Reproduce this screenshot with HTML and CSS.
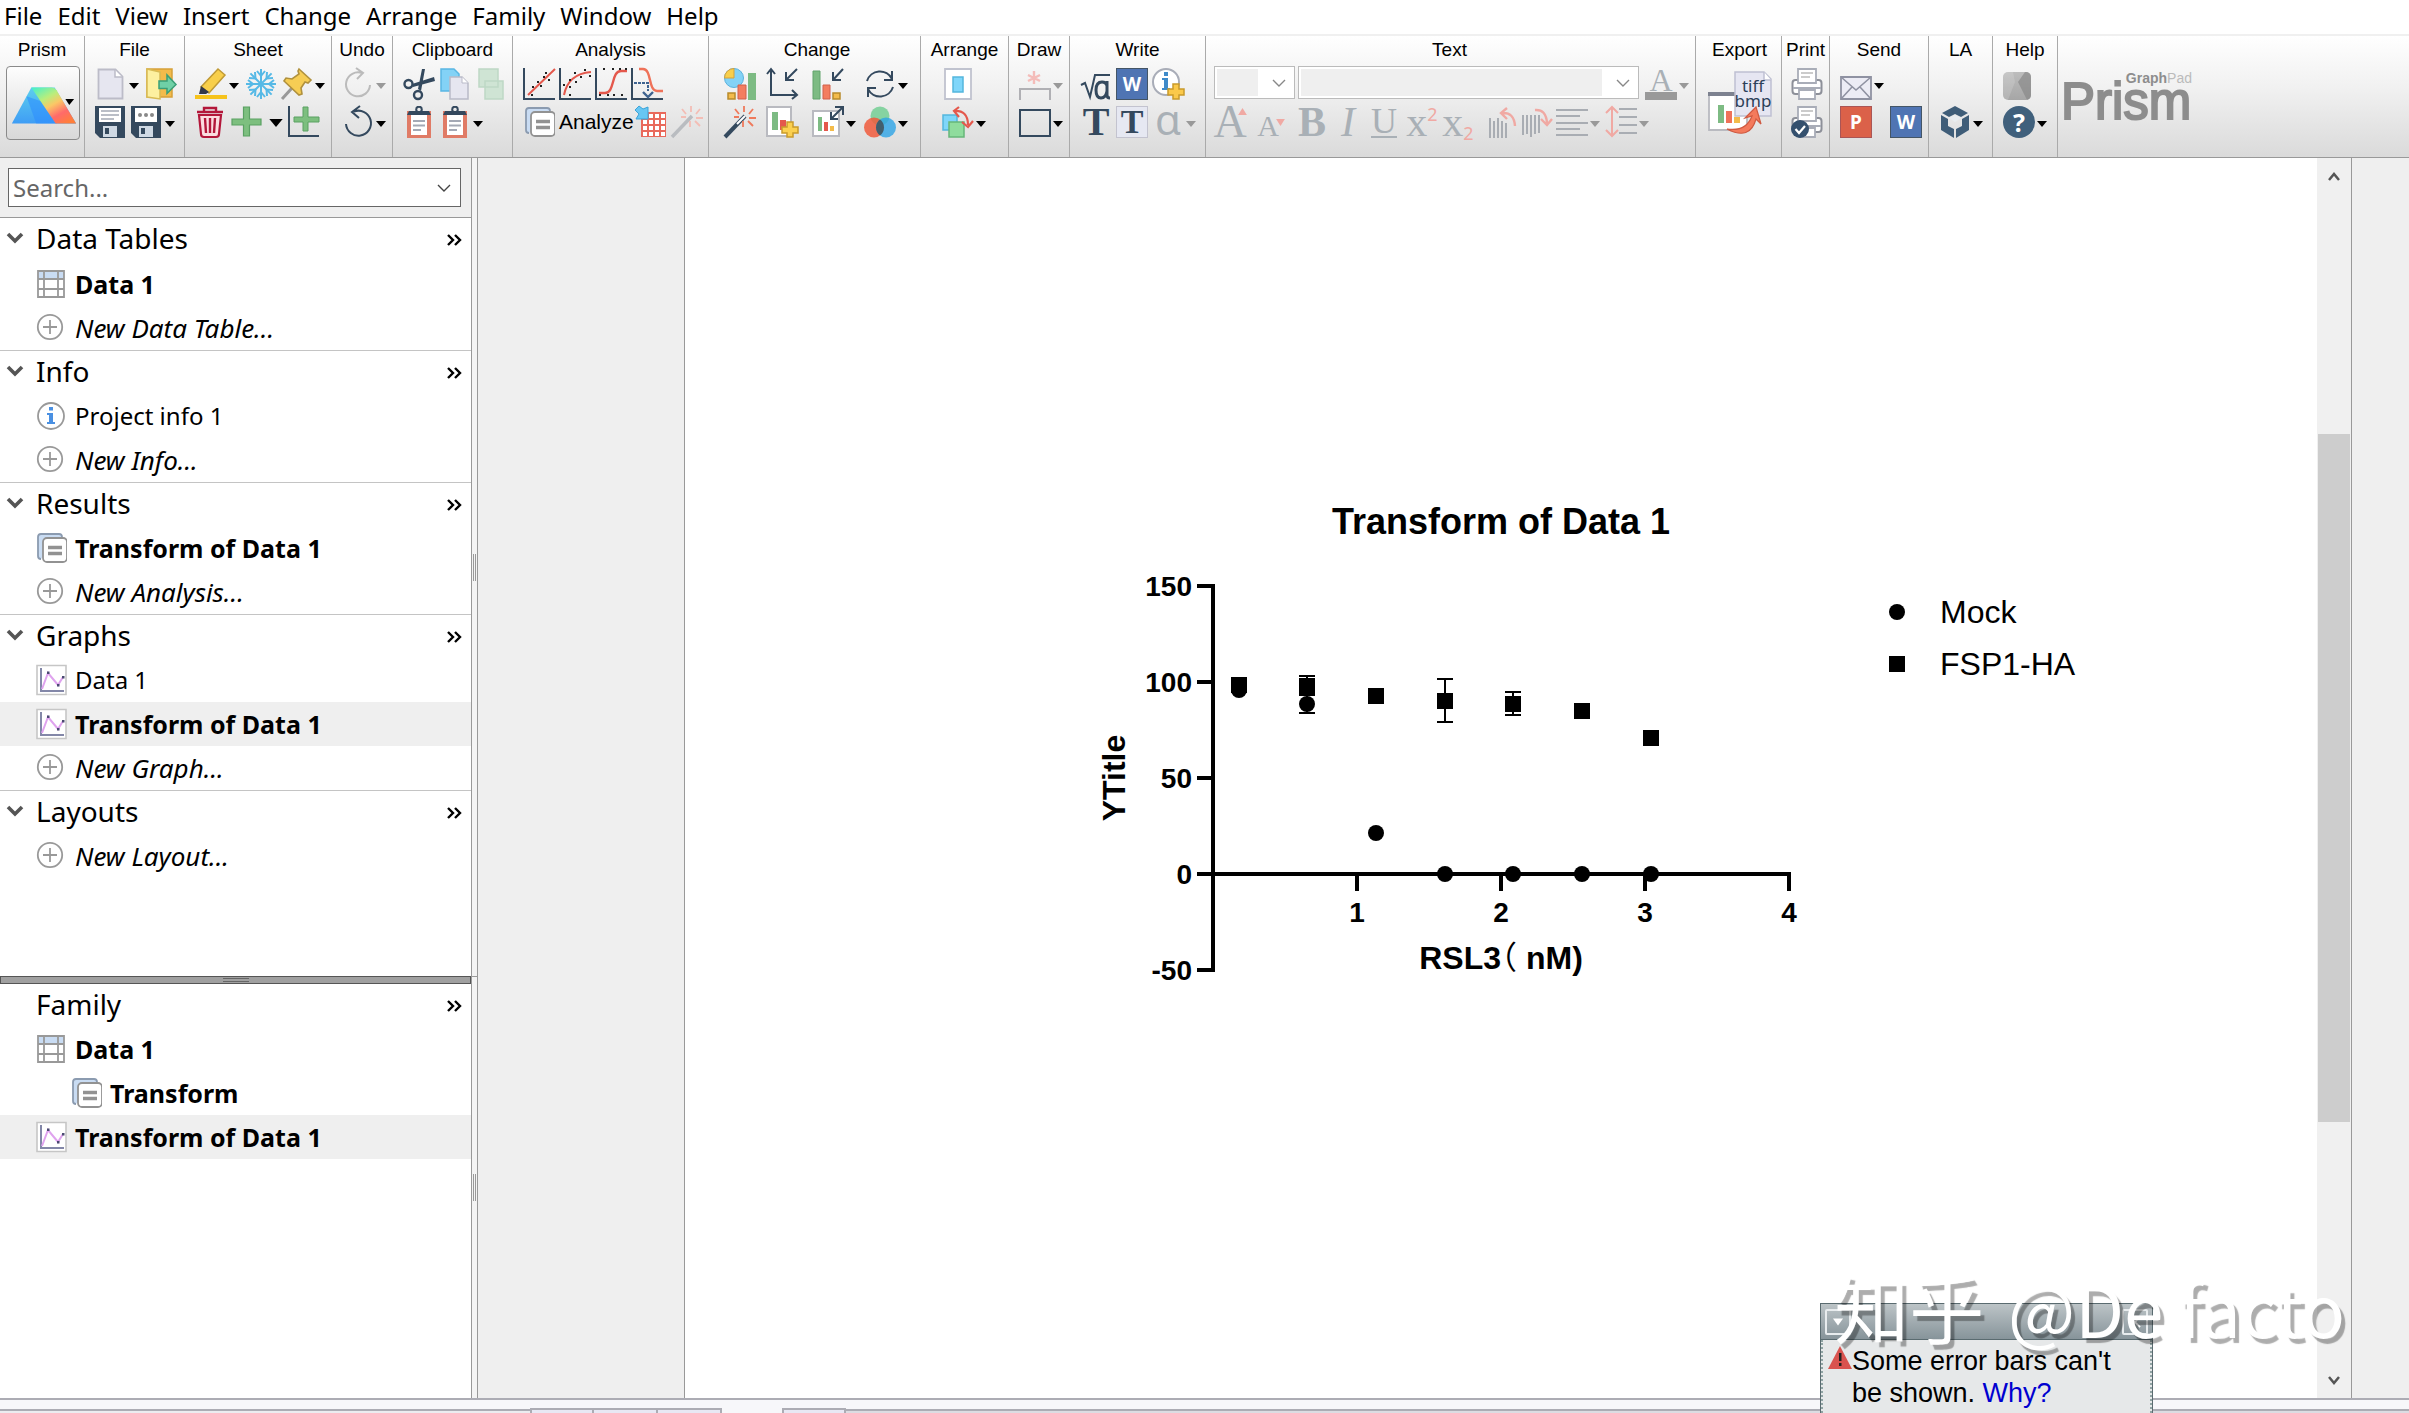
FILE: index.html
```html
<!DOCTYPE html>
<html lang="en">
<head>
<meta charset="utf-8">
<title>Prism - Transform of Data 1</title>
<link rel="stylesheet" href="styles.css">
</head>
<body>
<svg class="defs" aria-hidden="true">
  <defs>
    <linearGradient id="prism-left" x1="0" y1="0" x2="0" y2="1"><stop offset="0" stop-color="#5ccfee"/><stop offset="1" stop-color="#3f9df5"/></linearGradient>
    <linearGradient id="prism-right" x1="0.1" y1="0" x2="0.8" y2="1"><stop offset="0" stop-color="#4ff0c4"/><stop offset=".3" stop-color="#b9ee7c"/><stop offset=".5" stop-color="#fbc766"/><stop offset=".75" stop-color="#ff6a6a"/><stop offset="1" stop-color="#ff7f3a"/></linearGradient>
    <linearGradient id="badge-gray" x1="0" y1="0" x2="0" y2="1"><stop offset="0" stop-color="#bdbdbd"/><stop offset="1" stop-color="#a6a6a6"/></linearGradient>
    <symbol id="arrow" viewBox="0 0 10 6"><path d="M0 0h10L5 6z" fill="currentColor"/></symbol>
    <symbol id="chevron" viewBox="0 0 14 8"><path d="M1 1l6 6 6-6" fill="none" stroke="currentColor" stroke-width="1.4"/></symbol>
    <symbol id="fold" viewBox="0 0 18 12"><path d="M2 2l7 7 7-7" fill="none" stroke="#555" stroke-width="3.6"/></symbol>
    <symbol id="more" viewBox="0 0 16 12"><path d="M1 1l5 5-5 5M8 1l5 5-5 5" fill="none" stroke="#000" stroke-width="2.4"/></symbol>
    <symbol id="table" viewBox="0 0 32 32"><path d="M3 3h26v26H3z" fill="#fff"/><path d="M3 3h26v8H3z" fill="#c9dcf3"/><path d="M3 3h26v26H3zM9 3v26M23 3v26M3 11h26M3 21h26" fill="none" stroke="#999" stroke-width="1.8"/></symbol>
    <symbol id="plus" viewBox="0 0 32 32"><circle cx="15" cy="15" r="12.2" fill="#fff" stroke="#999" stroke-width="1.8"/><path d="M8 15h14M15 8v14" stroke="#999" stroke-width="1.8"/></symbol>
    <symbol id="info" viewBox="0 0 32 32"><circle cx="16" cy="16" r="13" fill="#fff" stroke="#999" stroke-width="1.8"/><path d="M14 7h4v3.500h-4zM12 13h6v9h2v2h-8v-2h2v-7h-2z" fill="#4a90e2"/></symbol>
    <symbol id="sheets" viewBox="0 0 32 32"><path d="M6 27q-3 0-3-3V5q0-3 3-3h18q3 0 3 3" fill="#c9dcf3" stroke="#8b9bb0" stroke-width="1.800"/><rect x="8" y="6" width="24" height="24" rx="4" fill="#fff" stroke="#929292" stroke-width="1.800"/><path d="M13 15.500h14M13 21.500h14" stroke="#929292" stroke-width="3.400"/></symbol>
    <symbol id="plot" viewBox="0 0 32 32"><path d="M2 1.500h29v29H2z" fill="#fff" stroke="#c6c6c6" stroke-width="1.600"/><path d="M6 4v23h23" fill="none" stroke="#8387a8" stroke-width="2"/><path d="M7 25l6-16 10 12 5-8" fill="none" stroke="#dfa3ee" stroke-width="2"/><path d="M12 7.500h2.500v2.500H12zM22 20h2.500v2.500H22zM27 12h2.500v2.500H27z" fill="#4a4a72"/></symbol>
    <symbol id="clip" viewBox="0 0 32 32"><rect x="6" y="7" width="20" height="24" fill="#fff" stroke="#e07b66" stroke-width="4"/><path d="M4 9l2-4h20l2 4z" fill="#34495e"/><circle cx="16" cy="3.500" r="2.800" fill="none" stroke="#34495e" stroke-width="2"/><path d="M10 15h12M10 19.500h12M10 24h8" stroke="#a4a9b5" stroke-width="2"/></symbol>
    <symbol id="printer" viewBox="0 0 32 32"><rect x="1.500" y="12" width="29" height="14" rx="3" fill="#fff" stroke="#8d9099" stroke-width="2"/><path d="M2 20h28" stroke="#a9adb8" stroke-width="2"/><path d="M7 1h18v14H7z" fill="#fff" stroke="#a9adb8" stroke-width="1.800"/><path d="M10 5h12M10 9h9" stroke="#bbb" stroke-width="1.500"/><path d="M8 22h16v9H8z" fill="#fff" stroke="#a9adb8" stroke-width="1.800"/></symbol>
  </defs>
</svg>

<nav class="menubar" aria-label="Main menu">
  <button>File</button><button>Edit</button><button>View</button><button>Insert</button><button>Change</button><button>Arrange</button><button>Family</button><button>Window</button><button>Help</button>
</nav>

<header class="toolbar">
  <section class="group g-prism"><h2>Prism</h2>
    <button class="prism-button" aria-label="Prism">
      <svg viewBox="0 0 74 74"><path d="M25 21h24l22 37H5z" fill="url(#prism-left)"/><path d="M37 36l14 22H30L20 30z" fill="#2b8cff" opacity=".55"/><path d="M25 21h21q3 0 5 3l20 34H50z" fill="url(#prism-right)"/><path d="M60 33h9l-5 6z" fill="#000"/></svg>
    </button>
  </section>

  <section class="group g-file"><h2>File</h2>
    <div class="row">
      <button class="tool" aria-label="New file"><svg class="ico" viewBox="0 0 32 32"><path d="M3.500 1.500h17l7 7v22h-24z" fill="#e6e6f0" stroke="#bcbcc8" stroke-width="1.800"/><path d="M20 2v7h7" fill="#fff" stroke="#bcbcc8" stroke-width="1.500"/></svg><svg class="arr"><use href="#arrow"/></svg></button>
      <button class="tool" aria-label="Open"><svg class="ico" viewBox="0 0 32 32"><path d="M2 1h25v28H2z" fill="#f3bb4b" stroke="#d6a13a" stroke-width="1.500"/><path d="M2 1l13 3v27L2 29z" fill="#fdf0a0" stroke="#d8bb54" stroke-width="1.500"/><path d="M14 13h8V7l9 9.500-9 9v-5h-8z" fill="#6fd0a6" stroke="#3a9e77" stroke-width="1.500"/></svg></button>
    </div>
    <div class="row">
      <button class="tool" aria-label="Save"><svg class="ico" viewBox="0 0 32 32"><path d="M0 0h30v32H5l-5-5z" fill="#34495e"/><path d="M4 2h22v14H4z" fill="#fff"/><path d="M6 5h18M6 9h18M6 13h13" stroke="#a4a9b5" stroke-width="1.600"/><path d="M8 20h14v11H8z" fill="#cfd9e4"/><path d="M10 22h4v6h-4z" fill="#34495e"/></svg></button>
      <button class="tool" aria-label="Save as"><svg class="ico" viewBox="0 0 32 32"><path d="M0 0h30v32H5l-5-5z" fill="#34495e"/><path d="M4 2h22v14H4z" fill="#fff"/><circle cx="9" cy="9" r="2" fill="#888"/><circle cx="15" cy="9" r="2" fill="#888"/><circle cx="21" cy="9" r="2" fill="#888"/><path d="M8 20h14v11H8z" fill="#cfd9e4"/><path d="M10 22h4v6h-4z" fill="#34495e"/></svg><svg class="arr"><use href="#arrow"/></svg></button>
    </div>
  </section>

  <section class="group g-sheet"><h2>Sheet</h2>
    <div class="row">
      <button class="tool" aria-label="Highlight"><svg class="ico" viewBox="0 0 32 32"><path d="M0 27h32v4H0z" fill="#f6c31c"/><path d="M23 1l7 6-16 18-8-6z" fill="#f8cf4b" stroke="#c09a35" stroke-width="1.500"/><path d="M6 18l8 6-3 2-7 0z" fill="#34384a"/></svg><svg class="arr"><use href="#arrow"/></svg></button>
      <button class="tool" aria-label="Freeze"><svg class="ico" viewBox="0 0 32 32"><g fill="none" stroke="#56b9e6" stroke-width="2"><path d="M16 1v30M1 16h30M5.400 5.400l21.200 21.200M26.600 5.400L5.400 26.600"/><path d="M12 3l4 5 4-5M12 29l4-5 4 5M3 12l5 4-5 4M29 12l-5 4 5 4M4 10l6.500.5L10 4M22 4l-.5 6.500L28 10M4 22l6.500-.5L10 28M22 28l-.5-6.500L28 22"/></g></svg></button>
      <button class="tool" aria-label="Pin"><svg class="ico" viewBox="0 0 32 32"><path d="M11 20L1 31" stroke="#999" stroke-width="3"/><path d="M18 1l12 11-3 3-3-1-4 6 1 6-3 1L3 13l2-3 6 1 7-5-1-3z" fill="#f6cd54" stroke="#b0913d" stroke-width="1.600"/></svg><svg class="arr"><use href="#arrow"/></svg></button>
    </div>
    <div class="row">
      <button class="tool" aria-label="Delete sheet"><svg class="ico" viewBox="0 0 32 32"><path d="M4 9h22l-2 19q0 3-3 3H9q-3 0-3-3z" fill="#fbdde0" stroke="#b3173a" stroke-width="2.200"/><path d="M2 6h26M9 5V2h12v3M10 12l1 15M15 12v15M20 12l-1 15" fill="none" stroke="#b3173a" stroke-width="2.400"/></svg></button>
      <button class="tool tool-wide" aria-label="New sheet"><svg class="ico" viewBox="0 0 32 32"><path d="M12.500 1h6v12H30v6H18.500v11h-6V19H1v-6h11.500z" fill="#7dbf7f" stroke="#5aa163" stroke-width="1.200"/></svg><svg class="arr arr-big"><use href="#arrow"/></svg></button>
      <button class="tool" aria-label="Add to axis"><svg class="ico" viewBox="0 0 32 32"><path d="M2 0v30h30" fill="none" stroke="#34495e" stroke-width="2"/><path d="M16 1h5v10h11v5H21v9h-5v-9H7v-5h9z" fill="#7dbf7f" stroke="#5aa163"/></svg></button>
    </div>
  </section>

  <section class="group g-undo"><h2>Undo</h2>
    <div class="row">
      <button class="tool off" aria-label="Redo" disabled><svg class="ico" viewBox="0 0 32 32"><path d="M28 17a12 12 0 1 1-8-12M14 0l7 5-6 6" fill="none" stroke="#bbb" stroke-width="2"/></svg><svg class="arr"><use href="#arrow"/></svg></button>
    </div>
    <div class="row">
      <button class="tool" aria-label="Undo"><svg class="ico" viewBox="0 0 32 32"><path d="M4 18a12.500 12.500 0 1 0 8-12.500M18 0l-8 6 7 6" fill="none" stroke="#34495e" stroke-width="2"/></svg><svg class="arr"><use href="#arrow"/></svg></button>
    </div>
  </section>

  <section class="group g-clip"><h2>Clipboard</h2>
    <div class="row">
      <button class="tool" aria-label="Cut"><svg class="ico" viewBox="0 0 32 32"><path d="M19 1l3 0-4 22-3-2zM31 9l1 4-22 6-1-3z" fill="#34495e"/><circle cx="5.500" cy="16" r="4" fill="none" stroke="#34495e" stroke-width="2.400"/><circle cx="15" cy="27" r="4" fill="none" stroke="#34495e" stroke-width="2.400"/></svg></button>
      <button class="tool" aria-label="Copy"><svg class="ico" viewBox="0 0 32 32"><path d="M2 1h13l5 5v17H2z" fill="#83d2f6" stroke="#5ab7e4" stroke-width="1.500"/><path d="M11 9h12l6 6v16H11z" fill="#e6e6f0" stroke="#b9bac8" stroke-width="1.500"/><path d="M23 9v6h6" fill="#fff" stroke="#b9bac8"/></svg></button>
      <button class="tool off" aria-label="Duplicate" disabled><svg class="ico" viewBox="0 0 32 32"><path d="M4 1h19v18H4zM10 13h18v18H10z" fill="#cfe4d4" stroke="#bed8c5" stroke-width="1.500"/></svg></button>
    </div>
    <div class="row">
      <button class="tool" aria-label="Paste"><svg class="ico"><use href="#clip"/></svg></button>
      <button class="tool" aria-label="Paste special"><svg class="ico"><use href="#clip"/></svg><svg class="arr"><use href="#arrow"/></svg></button>
    </div>
  </section>

  <section class="group g-analysis"><h2>Analysis</h2>
    <div class="row">
      <button class="tool" aria-label="Linear regression"><svg class="ico" viewBox="0 0 32 32"><path d="M1 0v31h31" fill="none" stroke="#34495e" stroke-width="2"/><path d="M5 27L32 1" stroke="#e4584c" stroke-width="2"/><path d="M9 18h2v2H9zM14 13h2v2h-2zM20 8h2v2h-2zM17 17h2v2h-2zM25 11h2v2h-2zM8 26h2v2H8zM22 4h2v2h-2z" fill="#222"/></svg></button>
      <button class="tool" aria-label="Curve fit"><svg class="ico" viewBox="0 0 32 32"><path d="M1 0v31h31" fill="none" stroke="#34495e" stroke-width="2"/><path d="M5 27Q9 6 32 4" fill="none" stroke="#e4584c" stroke-width="2"/><path d="M4 16h2v2H4zM10 11h2v2h-2zM15 4h2v2h-2zM10 18h2v2h-2zM16 13h2v2h-2zM21 8h2v2h-2zM25 1h2v2h-2zM30 7h2v2h-2zM10 26h2v2h-2z" fill="#222"/></svg></button>
      <button class="tool" aria-label="Dose response"><svg class="ico" viewBox="0 0 32 32"><path d="M1 0v31h31" fill="none" stroke="#34495e" stroke-width="2"/><path d="M4 25h6c10 0 6-22 16-22h6" fill="none" stroke="#e4584c" stroke-width="2.400"/><path d="M8 0h2v2H8zM17 0h2v2h-2zM24 0h2v2h-2zM30 0h2v2h-2zM4 26h2v2H4zM12 26h2v2h-2zM18 26h2v2h-2zM26 26h2v2h-2z" fill="#222"/></svg></button>
      <button class="tool" aria-label="Interpolate"><svg class="ico" viewBox="0 0 32 32"><path d="M1 0v31h31" fill="none" stroke="#34495e" stroke-width="2"/><path d="M8 1h4c9 0 5 22 14 22h6" fill="none" stroke="#ef7259" stroke-width="2.400"/><path d="M3 15h14v8" fill="none" stroke="#3e6390" stroke-width="2" stroke-dasharray="3 1"/><path d="M12 24l5 5 5-5" fill="none" stroke="#3e6390" stroke-width="2.400"/></svg></button>
    </div>
    <div class="row">
      <button class="tool tool-text"><svg class="ico"><use href="#sheets"/></svg>Analyze</button>
      <button class="tool" aria-label="Select data"><svg class="ico" viewBox="0 0 32 32"><path d="M6 6h25v25H6z" fill="#e9695b"/><path d="M8 8h4v4H8zM14 8h4v4h-4zM20 8h4v4h-4zM26 8h4v4h-4zM8 14h4v4H8zM14 14h4v4h-4zM20 14h4v4h-4zM26 14h4v4h-4zM8 20h4v4H8zM14 20h4v4h-4zM20 20h4v4h-4zM26 20h4v4h-4zM8 26h4v4H8zM14 26h4v4h-4zM20 26h4v4h-4zM26 26h4v4h-4z" fill="#fff"/><path d="M0 4l4-4 4 3 5-2v12H1l3-5z" fill="#67c6f3" stroke="#3ba3d8"/></svg></button>
      <button class="tool off" aria-label="Analysis wizard" disabled><svg class="ico" viewBox="0 0 32 32"><path d="M1 31L21 10" stroke="#b9bcc0" stroke-width="3.500"/><path d="M20 0v6M11 3l4 5M29 3l-4 5M25 12h7M24 15l5 5M19 15v6M10 11h5" stroke="#f3bdb5" stroke-width="1.800"/></svg></button>
    </div>
  </section>

  <section class="group g-change"><h2>Change</h2>
    <div class="row">
      <button class="tool" aria-label="Graph type"><svg class="ico" viewBox="0 0 32 32"><circle cx="10" cy="10" r="9.500" fill="#83d2f6" stroke="#5ab2dd"/><path d="M10 10H.5A9.500 9.500 0 0 1 10 .5z" fill="#f8cf4b" stroke="#d6a13a"/><path d="M4 25h7v6H4z" fill="#f3bb4b" stroke="#b88a2b" stroke-width="1.500"/><path d="M14 17h8v14h-8z" fill="#f37d5f" stroke="#d1604a"/><path d="M24 5h8v27h-8z" fill="#7dbb83"/></svg></button>
      <button class="tool" aria-label="Axes"><svg class="ico" viewBox="0 0 32 32"><path d="M5 1v26h26M1 6l4-5 4 5M26 22l5 5-5 4M31 1L20 12M20 4v8h8" fill="none" stroke="#34495e" stroke-width="2"/></svg></button>
      <button class="tool" aria-label="Bars"><svg class="ico" viewBox="0 0 32 32"><path d="M1 3h7v28H1z" fill="#7dbb83" stroke="#62a36c"/><path d="M11 17h7v14h-7z" fill="#f37d5f" stroke="#d1604a"/><path d="M21 25h7v6h-7z" fill="#f3bb4b" stroke="#b88a2b" stroke-width="1.500"/><path d="M31 1L21 12M21 4v8h8" fill="none" stroke="#34495e" stroke-width="2"/></svg></button>
      <button class="tool" aria-label="Swap"><svg class="ico" viewBox="0 0 32 32"><path d="M3 13A13.500 13.500 0 0 1 28 11M28 3v9h-8M29 19A13.500 13.500 0 0 1 4 21M4 29v-9h8" fill="none" stroke="#34495e" stroke-width="2"/></svg><svg class="arr"><use href="#arrow"/></svg></button>
    </div>
    <div class="row">
      <button class="tool" aria-label="Magic"><svg class="ico" viewBox="0 0 32 32"><path d="M1 31L21 10" stroke="#34495e" stroke-width="4"/><path d="M13 18l8-8" stroke="#fff" stroke-width="2"/><path d="M20 0v6M11 3l4 5M29 3l-4 5M25 12h7M24 15l5 5M19 15v6M10 11h5" stroke="#ef7a5c" stroke-width="1.800"/></svg></button>
      <button class="tool" aria-label="Add data set"><svg class="ico" viewBox="0 0 32 32"><path d="M1 1h24v29H1z" fill="#fff" stroke="#b9bac0" stroke-width="2"/><path d="M6 6h6v18H6z" fill="#7dbb83"/><path d="M14 14h6v10h-6z" fill="#e4584c"/><path d="M21 16h6v5h5v6h-5v4h-6v-4h-5v-6h5z" fill="#fbd04f" stroke="#c99a2b" stroke-width="1.500"/></svg></button>
      <button class="tool" aria-label="Resize graph"><svg class="ico" viewBox="0 0 32 32"><path d="M1 5h26v25H1z" fill="#fff" stroke="#b9bac0" stroke-width="2"/><path d="M6 11h4v14H6z" fill="#7dbb83"/><path d="M12 16h4v9h-4z" fill="#e4584c"/><path d="M18 20h4v5h-4z" fill="#f3bb4b"/><path d="M19 13L31 1M23 1h8v8M19 6v7h7" fill="none" stroke="#34495e" stroke-width="2"/></svg><svg class="arr"><use href="#arrow"/></svg></button>
      <button class="tool" aria-label="Color scheme"><svg class="ico" viewBox="0 0 32 32"><circle cx="16" cy="10" r="9.500" fill="#74cf94" opacity=".85"/><circle cx="10" cy="21.500" r="10" fill="#f05a3c" opacity=".85"/><circle cx="22" cy="21.500" r="10" fill="#2da4e6" opacity=".8"/><path d="M16 13.500a10 10 0 0 1 0 16 10 10 0 0 1 0-16z" fill="#40535c" opacity=".85"/></svg><svg class="arr"><use href="#arrow"/></svg></button>
    </div>
  </section>

  <section class="group g-arrange"><h2>Arrange</h2>
    <div class="row">
      <button class="tool" aria-label="Center"><svg class="ico" viewBox="0 0 32 32"><path d="M3 1h26v30H3z" fill="#fff" stroke="#c0c3cf" stroke-width="1.800"/><path d="M11 9h10v15H11z" fill="#7fd6fa" stroke="#54b6dd" stroke-width="1.500"/></svg></button>
    </div>
    <div class="row">
      <button class="tool" aria-label="Order"><svg class="ico" viewBox="0 0 32 32"><path d="M1 9h14v15H1z" fill="#7fd6fa" stroke="#54b6dd" stroke-width="1.500"/><path d="M7 16h15v15H7z" fill="#8fdc9d" stroke="#67b67a" stroke-width="1.500"/><path d="M12 5q14-1 14 14M17 1l-5 4 5 6M20 16l6 5 5-6" fill="none" stroke="#e4584c" stroke-width="2.200"/></svg><svg class="arr"><use href="#arrow"/></svg></button>
    </div>
  </section>

  <section class="group g-draw"><h2>Draw</h2>
    <div class="row">
      <button class="tool off" aria-label="Bracket" disabled><svg class="ico" viewBox="0 0 32 32"><path d="M1 32V21h30v11" fill="none" stroke="#b0b0b4" stroke-width="2"/><path d="M15 3v13M9 7l12 6M21 7L9 13" stroke="#f4bcb9" stroke-width="2.400"/></svg><svg class="arr"><use href="#arrow"/></svg></button>
    </div>
    <div class="row">
      <button class="tool" aria-label="Rectangle"><svg class="ico" viewBox="0 0 32 32"><path d="M1 4h30v26H1z" fill="none" stroke="#34495e" stroke-width="2"/></svg><svg class="arr"><use href="#arrow"/></svg></button>
    </div>
  </section>

  <section class="group g-write"><h2>Write</h2>
    <div class="row">
      <button class="tool" aria-label="Equation"><svg class="ico" viewBox="0 0 32 32"><path d="M1 17l4-2 5 14 5-22h15" fill="none" stroke="#34495e" stroke-width="2"/><path d="M27 13v14q0 3 3 3M27 18q-1-4-5-4-6 0-6 8t5 8q5 0 6-7" fill="none" stroke="#34495e" stroke-width="3"/></svg></button>
      <button class="tool" aria-label="Word object"><span class="tile tile-w">W</span></button>
      <button class="tool" aria-label="Add info"><svg class="ico" viewBox="0 0 32 32"><circle cx="14" cy="14" r="13" fill="#fff" stroke="#a9adb8" stroke-width="2"/><path d="M12 4h4v4h-4zM10 10h6v10h2v2h-8v-2h2v-8h-2z" fill="#3f8ac9"/><path d="M21 16h6v5h5v6h-5v4h-6v-4h-5v-6h5z" fill="#fbc94a" stroke="#c99a2b" stroke-width="1.500"/></svg></button>
    </div>
    <div class="row">
      <button class="tool glyph" aria-label="Text">T</button>
      <button class="tool glyph" aria-label="Text box"><span class="tile tile-t">T</span></button>
      <button class="tool glyph off" aria-label="Greek" disabled><span class="alpha">α</span><svg class="arr"><use href="#arrow"/></svg></button>
    </div>
  </section>

  <section class="group g-text"><h2>Text</h2>
    <div class="row">
      <span class="combo combo-size"><select aria-label="Font size" disabled><option></option></select><svg><use href="#chevron"/></svg></span>
      <span class="combo combo-font"><select aria-label="Font" disabled><option></option></select><svg><use href="#chevron"/></svg></span>
      <button class="tool glyph off" aria-label="Text color" disabled><span class="ink">A</span><svg class="arr"><use href="#arrow"/></svg></button>
    </div>
    <div class="row">
      <button class="tool glyph off" aria-label="Larger text" disabled><span class="big">A</span><svg class="tri" viewBox="0 0 10 8"><path d="M0 8h10L5 0z"/></svg></button>
      <button class="tool glyph off" aria-label="Smaller text" disabled><span class="small">A</span><svg class="tri tri-down" viewBox="0 0 10 8"><path d="M0 0h10L5 8z"/></svg></button>
      <button class="tool glyph off" aria-label="Bold" disabled><b>B</b></button>
      <button class="tool glyph off" aria-label="Italic" disabled><i>I</i></button>
      <button class="tool glyph off" aria-label="Underline" disabled><span class="under">U</span></button>
      <button class="tool glyph off" aria-label="Superscript" disabled>x<span class="script sup">2</span></button>
      <button class="tool glyph off" aria-label="Subscript" disabled>x<span class="script sub">2</span></button>
      <button class="tool off" aria-label="Rotate left" disabled><svg class="ico" viewBox="0 0 32 32"><path d="M6 12v20M10 15v17M14 12v20M18 15v17M22 17v15" stroke="#a9adb3" stroke-width="2"/><path d="M18 7q12-1 13 13M23 2l-6 5 6 6" fill="none" stroke="#f0a9a3" stroke-width="2.400"/></svg></button>
      <button class="tool off" aria-label="Rotate right" disabled><svg class="ico" viewBox="0 0 32 32"><path d="M3 9v20M7 9v19M11 9v22M15 9v19M19 9v18" stroke="#a9adb3" stroke-width="2"/><path d="M15 4q11-1 12 13M21 13l6 6 5-6" fill="none" stroke="#f0a9a3" stroke-width="2.400"/></svg></button>
      <button class="tool off" aria-label="Align" disabled><svg class="ico" viewBox="0 0 32 32"><path d="M0 4h32M0 10h24M0 17h32M0 23h24M0 29h32" stroke="#a9adb3" stroke-width="2"/></svg><svg class="arr"><use href="#arrow"/></svg></button>
      <button class="tool off" aria-label="Line spacing" disabled><svg class="ico" viewBox="0 0 32 32"><path d="M14 3h18M14 11h18M14 19h18M14 27h18" stroke="#a9adb3" stroke-width="2"/><path d="M7 1v29M1 7l6-6 6 6M1 24l6 6 6-6" fill="none" stroke="#f0a9a3" stroke-width="2"/></svg><svg class="arr"><use href="#arrow"/></svg></button>
    </div>
  </section>

  <section class="group g-export"><h2>Export</h2>
    <button class="export-button" aria-label="Export"><svg viewBox="0 0 64 64"><path d="M1 23h38v36H1z" fill="#fff" stroke="#b9bac0" stroke-width="1.800"/><path d="M0 21h39v4H0z" fill="#7d8290"/><path d="M10 34h6v18h-6z" fill="#7dbb83"/><path d="M18 40h6v12h-6z" fill="#ef7259"/><path d="M26 46h6v6h-6z" fill="#f3bb4b"/><path d="M27 1h29l7 7v37H27z" fill="#e6e6f2" stroke="#bfc0d2" stroke-width="1.500"/><path d="M56 1v8h7" fill="#fff" stroke="#bfc0d2" stroke-width="1.500"/><text x="45" y="21" class="fmt">tiff</text><text x="45" y="36" class="fmt">bmp</text><path d="M19 58q19 3 25-13l-7 2 11-11 5 17-5-5q-6 22-29 10z" fill="#f47a5c" stroke="#cf5a42" stroke-width="1.200"/></svg></button>
  </section>

  <section class="group g-print"><h2>Print</h2>
    <div class="row"><button class="tool" aria-label="Print"><svg class="ico"><use href="#printer"/></svg></button></div>
    <div class="row"><button class="tool" aria-label="Print now"><svg class="ico" viewBox="0 0 32 32"><use href="#printer" width="32" height="32"/><circle cx="9" cy="23" r="9" fill="#34506e"/><path d="M4.500 23l3.500 4 6-7" fill="none" stroke="#fff" stroke-width="2.200"/></svg></button></div>
  </section>

  <section class="group g-send"><h2>Send</h2>
    <div class="row"><button class="tool" aria-label="Mail"><svg class="ico" viewBox="0 0 32 32"><path d="M1 9h30v22H1z" fill="#ececf5" stroke="#8f92a2" stroke-width="1.800"/><path d="M1 9l15 13L31 9M1 31l11-12M31 31L20 19" fill="none" stroke="#8f92a2" stroke-width="1.600"/></svg><svg class="arr"><use href="#arrow"/></svg></button></div>
    <div class="row"><button class="tool" aria-label="Send to PowerPoint"><span class="tile tile-p">P</span></button><button class="tool" aria-label="Send to Word"><span class="tile tile-w">W</span></button></div>
  </section>

  <section class="group g-la"><h2>LA</h2>
    <div class="row"></div>
    <div class="row"><button class="tool" aria-label="LabArchives"><svg class="ico" viewBox="0 0 32 32"><path d="M16 0l13 7-7 4-6-3-6 3-7-4zM2 9l7 4v7l6 3v9L2 24zM30 9v15l-13 8v-9l6-3v-7z" fill="#3f5d78"/><path d="M10 12l6-3 6 3-6 4z" fill="#e9edf0"/></svg><svg class="arr"><use href="#arrow"/></svg></button></div>
  </section>

  <section class="group g-help"><h2>Help</h2>
    <div class="row"><button class="tool" aria-label="Prism academy"><svg class="ico" viewBox="0 0 32 32"><rect x="0" y="4" width="28" height="28" rx="5" fill="url(#badge-gray)"/><path d="M12 14L5 32H0V9q0-3 3-5h7z" fill="#fff" opacity=".15"/><path d="M15 14l7-10h2q4 1 4 5v18q0 4-4 5z" fill="#868686" opacity=".65"/></svg></button></div>
    <div class="row"><button class="tool" aria-label="Help"><span class="tile tile-help">?</span><svg class="arr"><use href="#arrow"/></svg></button></div>
  </section>

  <div class="brand"><span class="brand-top">Graph<span>Pad</span></span><span class="brand-name">Prism</span></div>
</header>

<div class="workspace">
  <aside class="sidebar">
    <div class="search">
      <label class="search-box"><input type="text" placeholder="Search..." aria-label="Search"><svg><use href="#chevron"/></svg></label>
    </div>
    <div class="tree">
      <section>
        <h3><svg class="fold"><use href="#fold"/></svg><span>Data Tables</span><button aria-label="More data tables"><svg><use href="#more"/></svg></button></h3>
        <a class="item strong" href="#"><svg><use href="#table"/></svg>Data 1</a>
        <a class="item new" href="#"><svg><use href="#plus"/></svg>New Data Table...</a>
      </section>
      <section>
        <h3><svg class="fold"><use href="#fold"/></svg><span>Info</span><button aria-label="More info"><svg><use href="#more"/></svg></button></h3>
        <a class="item" href="#"><svg><use href="#info"/></svg>Project info 1</a>
        <a class="item new" href="#"><svg><use href="#plus"/></svg>New Info...</a>
      </section>
      <section>
        <h3><svg class="fold"><use href="#fold"/></svg><span>Results</span><button aria-label="More results"><svg><use href="#more"/></svg></button></h3>
        <a class="item strong" href="#"><svg><use href="#sheets"/></svg>Transform of Data 1</a>
        <a class="item new" href="#"><svg><use href="#plus"/></svg>New Analysis...</a>
      </section>
      <section>
        <h3><svg class="fold"><use href="#fold"/></svg><span>Graphs</span><button aria-label="More graphs"><svg><use href="#more"/></svg></button></h3>
        <a class="item" href="#"><svg><use href="#plot"/></svg>Data 1</a>
        <a class="item strong current" href="#"><svg><use href="#plot"/></svg>Transform of Data 1</a>
        <a class="item new" href="#"><svg><use href="#plus"/></svg>New Graph...</a>
      </section>
      <section>
        <h3><svg class="fold"><use href="#fold"/></svg><span>Layouts</span><button aria-label="More layouts"><svg><use href="#more"/></svg></button></h3>
        <a class="item new" href="#"><svg><use href="#plus"/></svg>New Layout...</a>
      </section>
    </div>
    <div class="divider"><span></span></div>
    <div class="family">
      <h3><span>Family</span><button aria-label="More family"><svg><use href="#more"/></svg></button></h3>
      <a class="item strong" href="#"><svg><use href="#table"/></svg>Data 1</a>
      <a class="item strong child" href="#"><svg><use href="#sheets"/></svg>Transform</a>
      <a class="item strong current" href="#"><svg><use href="#plot"/></svg>Transform of Data 1</a>
    </div>
  </aside>
  <div class="splitter"><div><span></span></div><div><span></span></div></div>
  <main class="canvas">
    <div class="sheet">
      <svg class="chart" viewBox="685 158 1632 1240" preserveAspectRatio="xMinYMin meet" role="img" aria-label="Transform of Data 1">
        <text class="title" x="1501" y="534">Transform of Data 1</text>
        <path class="axis" d="M1197 586h16M1197 682h16M1197 778h16M1197 874h592M1197 970h16M1213 584v388M1357 874v17M1501 874v17M1645 874v17M1789 872v19"/>
        <g class="ylab"><text x="1192" y="596">150</text><text x="1192" y="692">100</text><text x="1192" y="788">50</text><text x="1192" y="884">0</text><text x="1192" y="980">-50</text></g>
        <g class="xlab"><text x="1357" y="922">1</text><text x="1501" y="922">2</text><text x="1645" y="922">3</text><text x="1789" y="922">4</text></g>
        <text class="name" x="1501" y="969">RSL3<tspan class="paren">（</tspan> nM)</text>
        <text class="name" transform="translate(1125 778) rotate(-90)">YTitle</text>
        <path class="err" d="M1307 676v37M1299 676h16M1299 713h16M1445 679v43M1437 679h16M1437 722h16M1513 692v23M1505 692h16M1505 715h16"/>
        <g class="mark">
          <circle cx="1239" cy="690" r="8"/><circle cx="1307" cy="704" r="8"/><circle cx="1376" cy="833" r="8"/><circle cx="1445" cy="874" r="8"/><circle cx="1513" cy="874" r="8"/><circle cx="1582" cy="874" r="8"/><circle cx="1651" cy="874" r="8"/><circle cx="1897" cy="612" r="8"/>
          <path d="M1231 677h16v16h-16zM1299 678h16v18h-16zM1368 688h16v16h-16zM1437 693h16v16h-16zM1505 696h16v16h-16zM1574 703h16v16h-16zM1643 730h16v16h-16zM1889 656h16v16h-16z"/>
        </g>
        <g class="legend"><text x="1940" y="623">Mock</text><text x="1940" y="675">FSP1-HA</text></g>
      </svg>
    </div>
    <div class="scrollbar">
      <button aria-label="Scroll up"><svg viewBox="0 0 14 10"><path d="M2 8l5-6 5 6" fill="none" stroke="#555" stroke-width="2.500"/></svg></button>
      <div class="track"><div class="thumb"></div></div>
      <button aria-label="Scroll down"><svg viewBox="0 0 14 10"><path d="M2 2l5 6 5-6" fill="none" stroke="#555" stroke-width="2.500"/></svg></button>
    </div>
    <div class="gutter"></div>
  </main>
</div>

<footer class="tabs"><span class="lead"></span><span class="tab"></span><span class="tab"></span><span class="tab"></span><span class="open"></span><span class="tab"></span><span class="rest"></span></footer>

<div class="notice" role="status">
  <div class="notice-bar"><button aria-label="Menu"><svg viewBox="0 0 24 26"><path d="M6 9h12l-6 8z" fill="#fff"/></svg></button><button aria-label="Close"><svg viewBox="0 0 24 26"><path d="M6 7l12 12M18 7L6 19" stroke="#fff" stroke-width="2"/></svg></button></div>
  <div class="notice-body"><svg viewBox="0 0 24 24"><path d="M12 1l12 23H0z" fill="#d9534f"/><path d="M11 8h2.500v8H11zM11 18h2.500v3H11z" fill="#222"/></svg><p>Some error bars can't<br>be shown. <a href="#">Why?</a></p></div>
</div>
<div class="watermark"><span>知乎</span> @De facto</div>
</body>
</html>
```

FILE: styles.css
```css
* { box-sizing: border-box; }
html, body { height: 100%; }
body {
  margin: 0;
  display: flex;
  flex-direction: column;
  position: relative;
  overflow: hidden;
  background: #efefef;
  color: #000;
  font: 24px/32px "Noto Sans", "Noto Sans CJK SC", sans-serif;
}
button {
  margin: 0;
  padding: 0;
  border: 0;
  background: none;
  color: inherit;
  font: inherit;
}
h2, h3, p { margin: 0; font-weight: 400; }
a { color: inherit; text-decoration: none; }
.defs { position: absolute; width: 0; height: 0; }

/* menu bar */
.menubar {
  display: flex;
  gap: 15px;
  height: 36px;
  padding: 0 0 2px 4px;
  background: #fff;
  border-bottom: 2px solid #f0f0f0;
}
.menubar button { white-space: nowrap; }

/* toolbar */
.toolbar {
  display: flex;
  flex: none;
  height: 122px;
  background: linear-gradient(#fff, #f0f0f0 45%, #dadada);
  border-bottom: 1px solid #999;
}
.group {
  flex: none;
  display: flex;
  flex-direction: column;
  padding-left: 10px;
  border-right: 1px solid #aaa;
}
.group h2 {
  height: 30px;
  margin-left: -10px;
  padding-top: 4px;
  font: 19px/20px "Liberation Sans", Arial, sans-serif;
  text-align: center;
}
.row { display: flex; gap: 4px; height: 38px; align-items: start; padding-top: 2px; }
.tool { display: flex; align-items: center; height: 32px; }
.ico { flex: none; width: 32px; height: 32px; overflow: visible; }
.arr { flex: none; width: 10px; height: 6px; margin: 4px 2px 0; }
.arr-big { width: 14px; height: 8px; margin: 2px 0 0 6px; }
.off { color: #999; }
.tool-text { width: 108px; gap: 4px; font: 21px/32px "Liberation Sans", Arial, sans-serif; }

.g-prism { width: 85px; padding-left: 6px; }
.g-prism h2 { margin-left: -6px; }
.g-file { width: 100px; }
.g-sheet { width: 147px; }
.g-undo { width: 61px; }
.g-clip { width: 120px; }
.g-analysis { width: 196px; }
.g-change { width: 212px; padding-left: 15px; }
.g-change .row { display: grid; grid-template-columns: 42px 46px 52px 46px; gap: 0; }
.g-arrange { width: 88px; padding-left: 21px; }
.g-arrange h2 { margin-left: -21px; }
.g-draw { width: 61px; }
.g-write { width: 136px; }
.g-text { width: 490px; padding-left: 8px; }
.g-export { width: 86px; padding-left: 12px; }
.g-print { width: 48px; padding-left: 9px; }
.g-print h2 { margin-left: -9px; }
.g-send { width: 99px; }
.g-send .row { gap: 18px; }
.g-la { width: 64px; }
.g-help { width: 65px; }

.prism-button {
  width: 74px;
  height: 74px;
  border: 1px solid #8a8a8a;
  border-radius: 4px;
  background: linear-gradient(#fdfdfd, #d8d8d8);
}
.prism-button svg { display: block; width: 72px; height: 72px; }
.export-button { width: 64px; height: 64px; margin-top: 5px; }
.export-button svg { display: block; }
.fmt { font: 17px "Noto Sans", sans-serif; text-anchor: middle; fill: #2c4058; }

.tile {
  width: 32px;
  height: 32px;
  border: 1px solid #456;
  color: #fff;
  font: 700 19px/30px "Noto Sans", sans-serif;
  text-align: center;
}
.tile-w { background: #4f74b3; }
.tile-p { background: #db6149; border-color: #a55; }
.tile-t { background: #e6e8f2; border-color: #c3c3cf; color: #34495e; font: 700 34px/30px "Liberation Serif", serif; }
.tile-help { border: 0; border-radius: 50%; background: #40607c; font-size: 25px; line-height: 32px; }

.glyph {
  width: 32px;
  justify-content: center;
  color: #34495e;
}
.g-write .glyph { font: 700 40px/32px "Liberation Serif", serif; }
.glyph.off { color: #a9b0b6; }
.g-write .glyph.off { width: 46px; font: 42px/32px "Noto Sans", sans-serif; }
.alpha { width: 32px; margin-top: -6px; }
.glyph .arr { color: #999; }

.g-text .row:last-child { display: grid; grid-template-columns: 41px 41px 36px 36px 38px 36px 42px 36px 36px 49px 46px; gap: 0; }
.g-text .row:first-of-type { gap: 3px; padding-top: 0; }
.g-text .glyph { font: 42px/32px "Liberation Serif", serif; }
.glyph .big { font-size: 46px; }
.glyph .small { font-size: 30px; line-height: 32px; margin-top: 8px; }
.glyph .under { border-bottom: 2px solid #a9b0b6; font-size: 36px; line-height: 30px; }
.tri { flex: none; width: 9px; height: 7px; margin: 0 0 22px -9px; fill: #f0a9a3; }
.tri-down { margin: 0 0 0 -3px; }
.g-text .ink { width: 32px; border-bottom: 8px solid #999; font-size: 32px; line-height: 24px; }
.g-text .row:first-of-type .glyph { width: 46px; margin: 2px 0 0 3px; }
.script { color: #f0a9a3; font: 18px/20px "Noto Sans", sans-serif; }
.sup { margin-bottom: 16px; }
.sub { margin-top: 22px; }

.combo { display: grid; align-items: center; height: 33px; }
.combo select, .combo svg { grid-area: 1 / 1; }
.combo select {
  width: 100%;
  height: 33px;
  appearance: none;
  border: 1px solid #bbb;
  border-radius: 0;
  opacity: 1;
  background: linear-gradient(#efefef, #efefef) 2px 2px / calc(100% - 38px) 27px no-repeat #fff;
}
.combo svg { z-index: 1; justify-self: end; width: 14px; height: 8px; margin-right: 9px; color: #888; }
.combo-size { width: 81px; }
.combo-font { width: 341px; }

.brand {
  display: flex;
  flex-direction: column;
  width: 134px;
  padding: 34px 0 0 3px;
  color: #8d8d8d;
  font-family: "Liberation Sans", Arial, sans-serif;
}
.brand-top { font: 700 14px/16px "Liberation Sans", Arial, sans-serif; text-align: right; }
.brand-top span { font-weight: 400; color: #bbb; }
.brand-name { font-size: 51px; line-height: 32px; -webkit-text-stroke: 2px #8d8d8d; }

/* navigator */
.workspace { flex: 1; display: flex; min-height: 0; }
.sidebar { flex: none; width: 471px; display: flex; flex-direction: column; background: #fff; }
.search { height: 60px; padding: 10px 10px 0 8px; background: #efefef; border-bottom: 1px solid #999; }
.search-box { display: flex; align-items: center; height: 39px; padding: 0 9px 0 4px; border: 1px solid #666; background: #fff; }
.search-box input { flex: 1; min-width: 0; padding: 0; border: 0; outline: 0; background: none; font: inherit; }
.search-box input::placeholder { color: #666; opacity: 1; }
.search-box svg { width: 14px; height: 8px; color: #444; }
.tree { flex: 1; }
.tree section + section { border-top: 1px solid #c4c4c4; }
h3 { display: flex; align-items: center; height: 43px; padding: 0 8px 4px 36px; font-size: 28px; line-height: 38px; }
h3 span { flex: 1; }
h3 .fold { width: 18px; height: 12px; margin: 0 12px 0 -30px; }
h3 button { width: 16px; height: 38px; }
h3 button svg { display: block; width: 16px; height: 12px; margin: 4px 0 0; }
.tree section:first-child h3 { height: 44px; }
.item { display: flex; align-items: center; gap: 8px; height: 44px; padding-left: 35px; white-space: nowrap; }
.item svg { width: 32px; height: 32px; }
.strong { font-size: 25px; font-weight: 700; }
.new { font-size: 26px; font-style: italic; }
.child { padding-left: 70px; }
.current { background: #efefef; }
.divider { display: flex; justify-content: center; align-items: center; height: 8px; background: #a0a0a0; border: 1px solid #555; }
.divider span { width: 26px; height: 4px; border: 1px solid #666; border-width: 1px 0; }
.family { height: 414px; }
.splitter { flex: none; display: flex; flex-direction: column; width: 7px; border: 1px solid #999; border-width: 0 1px; background: #f4f4f4; }
.splitter div { display: flex; flex: 1; align-items: center; justify-content: center; }
.splitter div + div { flex: none; height: 422px; border-top: 1px solid #999; }
.splitter span { width: 3px; height: 27px; border: 1px solid #999; border-width: 0 1px; }

/* graph sheet */
.canvas { flex: 1; display: flex; min-width: 0; padding-left: 206px; }
.sheet { flex: 1; min-width: 0; background: #fff; border-left: 1px solid #999; }
.chart { display: block; width: 100%; height: 100%; font-family: "Liberation Sans", Arial, "Noto Sans CJK SC", sans-serif; }
.title, .name, .xlab, .ylab { font-weight: 700; text-anchor: middle; }
.title { font-size: 36px; }
.name { font-size: 32px; white-space: pre; }
.paren { font-family: "Noto Sans CJK SC", sans-serif; font-weight: 400; font-feature-settings: "halt"; }
.xlab, .ylab { font-size: 28px; }
.ylab { text-anchor: end; }
.legend { font-size: 32px; }
.axis { fill: none; stroke: #000; stroke-width: 4; }
.err { fill: none; stroke: #000; stroke-width: 2; }
.scrollbar { flex: none; display: flex; flex-direction: column; width: 35px; background: #f0f0f0; border-right: 1px solid #999; }
.scrollbar button { flex: none; height: 37px; }
.scrollbar svg { display: block; width: 14px; height: 10px; margin: auto; }
.track { flex: 1; padding: 0 1px; }
.track::before { content: ""; display: block; height: 20.5%; }
.thumb { height: 59%; background: #cdcdcd; }
.gutter { flex: none; width: 57px; }

/* window tabs */
.tabs { flex: none; display: flex; align-items: flex-end; height: 15px; background: #f7f7fa; border-top: 2px solid #acacb4; }
.lead, .rest { height: 4px; border-top: 2px solid #acacb4; background: #ececf0; }
.lead { width: 22%; }
.rest { flex: 1; background: #dcdce2; }
.tab { width: 64px; height: 5px; border: 2px solid #acacb4; border-bottom: 0; background: #e8e8f4; }
.tab + .tab { border-left: 0; }
.open { width: 60px; }

/* floating notice */
.notice { position: absolute; right: 256px; bottom: 0; width: 333px; height: 110px; border: 1px solid #5a6b70; border-bottom: 0; background: #e6e8e9; }
.notice-bar { display: flex; justify-content: space-between; align-items: center; height: 36px; padding: 0 4px; background: linear-gradient(#bcc4c7, #87949a); border-bottom: 1px solid #5a6b70; }
.notice-bar button { width: 26px; height: 26px; border: 2px solid #e8ecee; border-radius: 2px; }
.notice-bar svg { display: block; width: 22px; height: 22px; }
.notice-body { display: flex; height: 73px; padding: 5px 0 0 5px; border: 2px dotted #8fa3a3; border-width: 0 2px; font: 27px/32px "Liberation Sans", Arial, sans-serif; }
.notice-body svg { flex: none; width: 24px; height: 24px; }
.notice-body a { color: #0000d0; }

.watermark {
  position: absolute;
  right: 64px;
  bottom: 56px;
  color: #fff;
  font: 71px/100px "Noto Sans CJK SC", sans-serif;
  text-shadow: 4px 5px 1px rgba(0, 0, 0, .32);
  white-space: nowrap;
  pointer-events: none;
}
.watermark span { margin-right: 8px; font-size: 75px; }
```
